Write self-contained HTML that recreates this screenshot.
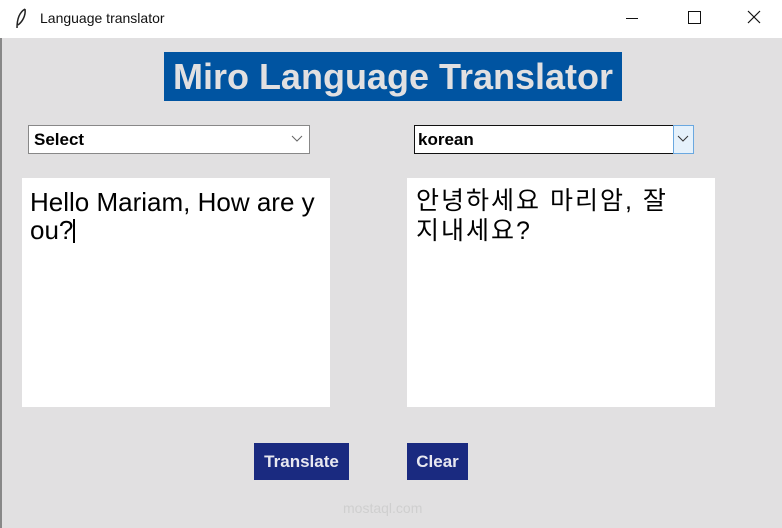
<!DOCTYPE html>
<html><head><style>
body{margin:0;width:782px;height:528px;overflow:hidden;background:#e1e0e1;font-family:"Liberation Sans","Noto Sans CJK KR",sans-serif;position:relative}
.a{position:absolute}
</style></head><body>
<div class="a" style="left:0;top:0;width:782px;height:38px;background:#fff"></div>
<svg class="a" style="left:14px;top:8px" width="14" height="22"><path d="M11 1 C6 4 3 10 3 20 M11 1 C12 8 8 14 4 17" stroke="#222" stroke-width="1.5" fill="none"/></svg>
<div class="a" style="left:40px;top:10px;font-size:14px;color:#111">Language translator</div>
<div class="a" style="left:626px;top:18px;width:12px;height:1px;background:#111"></div>
<div class="a" style="left:688px;top:11px;width:11px;height:11px;border:1px solid #111"></div>
<svg class="a" style="left:747px;top:10px" width="14" height="14"><path d="M1 1L13 13M13 1L1 13" stroke="#111" stroke-width="1.2"/></svg>
<div class="a" style="left:0;top:38px;width:2px;height:490px;background:#888"></div>
<div class="a" style="left:164px;top:52px;width:458px;height:49px;background:#0054a1;color:#e1e0e1;font-weight:bold;font-size:36px;line-height:49px;text-align:center;white-space:nowrap">Miro Language Translator</div>
<div class="a" style="left:28px;top:125px;width:280px;height:27px;background:#fff;border:1px solid #888"></div>
<div class="a" style="left:34px;top:130px;font-weight:bold;font-size:17px">Select</div>
<svg class="a" style="left:291px;top:135px" width="12" height="8"><path d="M1 1L6 6L11 1" stroke="#666" fill="none"/></svg>
<div class="a" style="left:414px;top:125px;width:258px;height:27px;background:#fff;border:1px solid #111"></div>
<div class="a" style="left:673px;top:125px;width:21px;height:29px;background:#e5f1fb;border:1px solid #6aa8e0;box-sizing:border-box"></div>
<svg class="a" style="left:677px;top:135px" width="12" height="8"><path d="M1 1L6 6L11 1" stroke="#333" fill="none"/></svg>
<div class="a" style="left:418px;top:130px;font-weight:bold;font-size:17px">korean</div>
<div class="a" style="left:22px;top:178px;width:308px;height:229px;background:#fff"></div>
<div class="a" style="left:30px;top:188px;width:300px;font-size:26px;line-height:28px;color:#000;white-space:nowrap">Hello Mariam, How are y<br>ou?<span style="display:inline-block;width:2px;height:24px;background:#000;vertical-align:-4px"></span></div>
<div class="a" style="left:407px;top:178px;width:308px;height:229px;background:#fff"></div>
<div class="a" style="left:416px;top:186px;width:300px;font-size:25px;line-height:30px;color:#000;white-space:nowrap;letter-spacing:2px">안녕하세요 마리암, 잘<br>지내세요?</div>
<div class="a" style="left:254px;top:443px;width:95px;height:37px;background:#1a2a80;color:#e8e8f0;font-weight:bold;font-size:17px;line-height:37px;text-align:center">Translate</div>
<div class="a" style="left:407px;top:443px;width:61px;height:37px;background:#1a2a80;color:#e8e8f0;font-weight:bold;font-size:17px;line-height:37px;text-align:center">Clear</div>
<div class="a" style="left:343px;top:500px;font-size:14px;color:#cfcfcf">mostaql.com</div>
</body></html>
